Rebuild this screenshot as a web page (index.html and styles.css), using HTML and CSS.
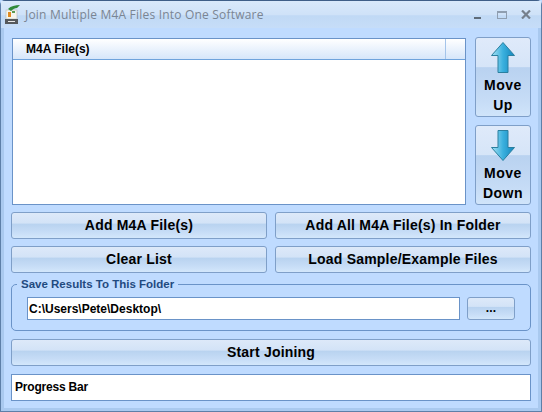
FILE: index.html
```html
<!DOCTYPE html>
<html lang="en">
<head>
  <meta charset="UTF-8" />
  <title>Join Multiple M4A Files Into One Software</title>
  <link rel="stylesheet" href="styles.css">
</head>
<body>
  <div class="window">

    <!-- Title bar -->
    <div class="titlebar">
      <svg class="app-icon" width="18" height="20" viewBox="0 0 18 20">
        <rect x="1" y="5" width="11" height="9" fill="#f4f4ec" stroke="#b8b8b0" stroke-width="0.6"/>
        <path d="M3 4 C6 1 10 0 15 0 L12 3 C10 3 8 4 6 6 Z" fill="#2f8a3a"/>
        <rect x="3" y="7" width="3" height="5" fill="#e08a20"/>
        <rect x="7" y="6" width="3" height="2" fill="#5a9a50"/>
        <rect x="0" y="14" width="13" height="5" fill="#55595c"/>
        <rect x="3" y="16" width="7" height="1" fill="#e8e8e8"/>
      </svg>
      <span class="title">Join Multiple M4A Files Into One Software</span>
      <div class="win-controls">
        <span class="ctl-min"></span>
        <span class="ctl-max"></span>
        <svg class="ctl-close" width="10" height="9" viewBox="0 0 10 9">
          <path d="M1 0.5 L9 8.5 M9 0.5 L1 8.5" stroke="#76808c" stroke-width="2.2"/>
        </svg>
      </div>
    </div>

    <div class="client">
      <div class="top-row">
        <div class="listbox">
          <div class="list-head">
            <span class="col-name">M4A File(s)</span>
            <span class="col-rest"></span>
          </div>
        </div>
        <div class="move-col">
          <button type="button" class="btn move-btn">
            <svg class="arrow" width="24" height="31" viewBox="0 0 24 31">
              <defs>
                <linearGradient id="arrowFill" x1="0" y1="0" x2="1" y2="0">
                  <stop offset="0" stop-color="#a8e2f4"/>
                  <stop offset="0.5" stop-color="#3ab0de"/>
                  <stop offset="1" stop-color="#1385bd"/>
                </linearGradient>
              </defs>
              <path d="M12 0.5 L23.5 13.5 L17 13.5 L17 30.5 L7 30.5 L7 13.5 L0.5 13.5 Z" fill="url(#arrowFill)" stroke="#2a7f9f" stroke-width="1"/>
            </svg>
            <span>Move<br>Up</span>
          </button>
          <button type="button" class="btn move-btn">
            <svg class="arrow" width="24" height="31" viewBox="0 0 24 31">
              <path d="M12 30.5 L23.5 17.5 L17 17.5 L17 0.5 L7 0.5 L7 17.5 L0.5 17.5 Z" fill="url(#arrowFill)" stroke="#2a7f9f" stroke-width="1"/>
            </svg>
            <span>Move<br>Down</span>
          </button>
        </div>
      </div>

      <div class="btn-row">
        <button type="button" class="btn">Add M4A File(s)</button>
        <button type="button" class="btn">Add All M4A File(s) In Folder</button>
      </div>
      <div class="btn-row">
        <button type="button" class="btn">Clear List</button>
        <button type="button" class="btn">Load Sample/Example Files</button>
      </div>

      <fieldset class="save-group">
        <legend>Save Results To This Folder</legend>
        <input class="path-input" type="text" value="C:\Users\Pete\Desktop\" />
        <button type="button" class="btn browse-btn">...</button>
      </fieldset>

      <button type="button" class="btn start-btn">Start Joining</button>
      <div class="progress">Progress Bar</div>
    </div>
  </div>
</body>
</html>
```

FILE: styles.css
```css
html, body {
  margin: 0;
  padding: 0;
  height: 100%;
  background-color: #bfdbff;
  font-family: "Liberation Sans", Arial, sans-serif;
  overflow: hidden;
}

.window {
  box-sizing: border-box;
  width: 542px;
  height: 412px;
  display: flex;
  flex-direction: column;
  border: 1px solid #5d7fa8;
  border-top-color: #3f5f88;
  border-radius: 5px 5px 0 0;
  background-color: #bfdbff;
}

.titlebar {
  height: 27px;
  display: flex;
  align-items: center;
  padding-left: 4px;
  flex-shrink: 0;
  background: linear-gradient(to bottom, #d9e9fb 0%, #cfe2f8 50%, #c0d9f5 55%, #c6ddf8 100%);
}

.app-icon {
  margin-right: 2px;
}

.title {
  font-family: "Open Sans", "Noto Sans", sans-serif;
  font-size: 12px;
  color: #7a8593;
  letter-spacing: 0.2px;
}

.win-controls {
  margin-left: auto;
  display: flex;
  align-items: center;
  padding-right: 10px;
}

.ctl-min {
  width: 7px;
  height: 2px;
  margin-top: 7px;
  margin-right: 16px;
  background-color: #5f6b78;
}

.ctl-max {
  box-sizing: border-box;
  width: 10px;
  height: 8px;
  margin-right: 14px;
  border: 1px solid #8f9eb0;
  border-top-width: 2px;
}

.client {
  flex: 1;
  display: flex;
  flex-direction: column;
  padding: 9px 7px 0;
  border-left: 3px solid #a9c9ef;
  border-right: 3px solid #a9c9ef;
  border-bottom: 3px solid #a9c9ef;
}

.top-row {
  display: flex;
  justify-content: space-between;
  height: 168px;
}

.listbox {
  box-sizing: border-box;
  width: 454px;
  margin-left: 1px;
  margin-top: 1px;
  background-color: #fff;
  border: 1px solid #6a93c8;
}

.list-head {
  display: flex;
  height: 20px;
  border-bottom: 1px solid #6fa3dc;
  background: linear-gradient(to bottom, #fff 0%, #d6e6fa 100%);
  font-size: 12px;
  font-weight: bold;
  line-height: 20px;
}

.col-name {
  width: 433px;
  padding-left: 13px;
  box-sizing: border-box;
  border-right: 1px solid #a4c4ea;
}

.col-rest {
  flex: 1;
}

.move-col {
  width: 56px;
  display: flex;
  flex-direction: column;
  justify-content: space-between;
}

.btn {
  box-sizing: border-box;
  padding: 0 0 2px;
  border: 1px solid #7f9fc8;
  border-radius: 3px;
  font-family: "Liberation Sans", Arial, sans-serif;
  font-size: 14px;
  font-weight: bold;
  letter-spacing: 0.2px;
  color: #000;
  background: linear-gradient(to bottom, #dde9f9 0%, #d3e3f7 40%, #b9d3f0 45%, #c6dcf6 75%, #d3e7fb 100%);
}

.move-btn {
  height: 80px;
  padding: 0;
  display: flex;
  flex-direction: column;
  align-items: center;
  line-height: 20px;
  letter-spacing: 0.5px;
  background: linear-gradient(to bottom, #dfeafa 0%, #d6e5f8 37%, #b9d2f0 38%, #c6dcf6 80%, #d0e4fa 100%);
}

.arrow {
  margin-top: 4px;
  margin-bottom: 2px;
}

.btn-row {
  display: flex;
  justify-content: space-between;
  margin-top: 7px;
}

.btn-row .btn {
  width: 256px;
  height: 27px;
}

.save-group {
  box-sizing: border-box;
  height: 53px;
  margin: 5px 0 0;
  padding: 0 15px;
  display: flex;
  justify-content: space-between;
  align-items: flex-start;
  border: 1px solid #6a93c8;
  border-radius: 5px;
}

.save-group legend {
  padding: 0 4px;
  margin-left: -10px;
  font-size: 11.5px;
  font-weight: bold;
  color: #1f4a80;
}

.path-input {
  box-sizing: border-box;
  width: 433px;
  height: 23px;
  margin-top: 7px;
  padding: 0 1px;
  border: 1px solid #6a93c8;
  background-color: #fff;
  font-family: "Liberation Sans", Arial, sans-serif;
  font-size: 12px;
  font-weight: bold;
  color: #000;
  outline: none;
}

.browse-btn {
  width: 48px;
  height: 23px;
  margin-top: 7px;
  font-size: 12px;
}

.start-btn {
  width: 100%;
  height: 27px;
  margin-top: 8px;
}

.progress {
  box-sizing: border-box;
  height: 27px;
  margin-top: 8px;
  padding-left: 3px;
  border: 1px solid #6a93c8;
  background-color: #fff;
  font-size: 12px;
  font-weight: bold;
  letter-spacing: -0.2px;
  line-height: 24px;
}
```
